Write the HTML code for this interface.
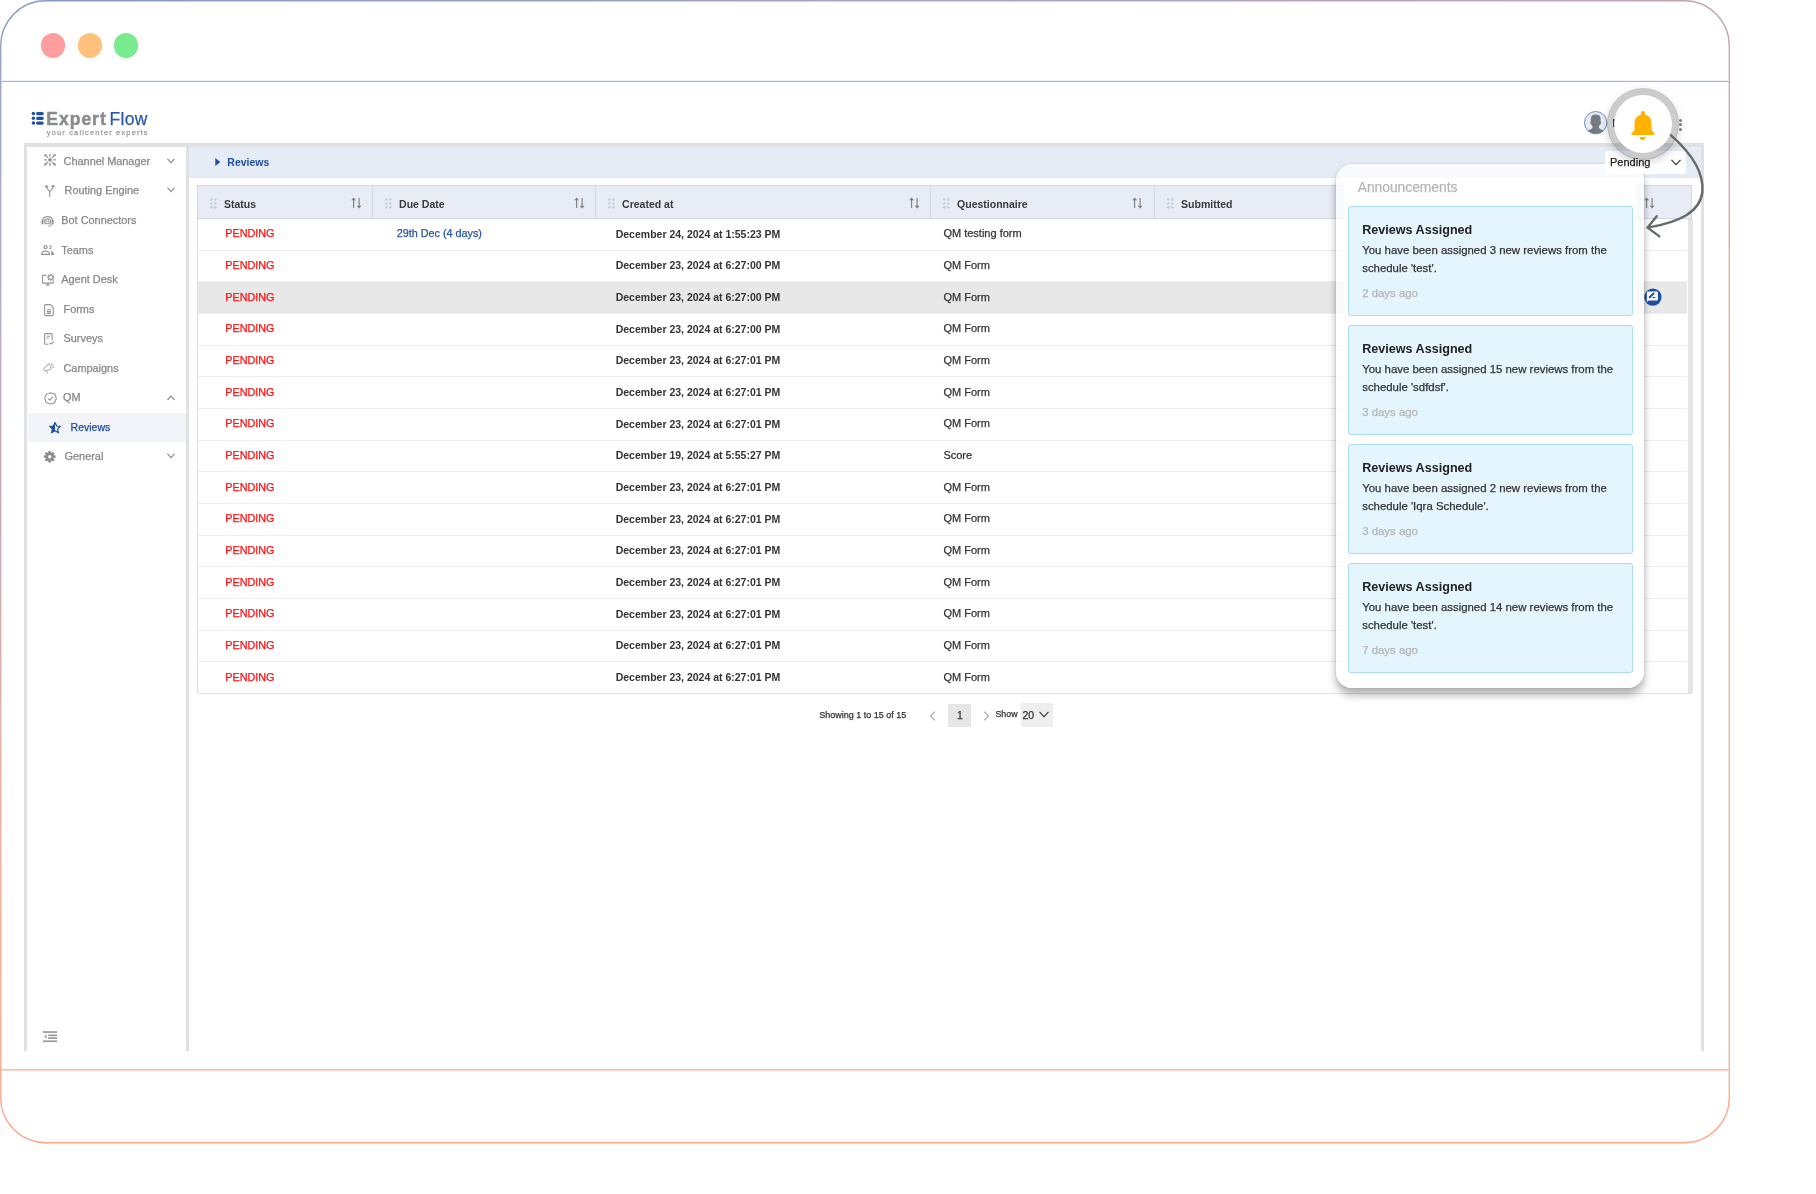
<!DOCTYPE html>
<html><head><meta charset="utf-8"><title>Reviews</title>
<style>
html,body{margin:0;padding:0;}
body{width:1816px;height:1194px;position:relative;overflow:hidden;background:#fff;font-family:'Liberation Sans', sans-serif;}
.t{position:absolute;white-space:nowrap;}
#wrap{position:absolute;left:0;top:0;width:1816px;height:1194px;will-change:transform;}
.r{position:absolute;}
svg{position:absolute;overflow:visible;}
</style></head><body><div id="wrap">

<svg style="left:0;top:0" width="1816" height="1194" viewBox="0 0 1816 1194">
<defs><linearGradient id="fg" gradientUnits="userSpaceOnUse" x1="0" y1="0" x2="282.5" y2="1068.4">
<stop offset="0" stop-color="#8898c8"/><stop offset="0.2" stop-color="#a6a6c2"/><stop offset="0.46" stop-color="#c8a4b0"/><stop offset="0.8" stop-color="#f8a88e"/><stop offset="1" stop-color="#ffa688"/></linearGradient></defs>
<rect x="0.75" y="0.75" width="1728.5" height="1142" rx="45" ry="45" fill="none" stroke="url(#fg)" stroke-width="1.3"/>
<rect x="1" y="80" width="1728" height="1" fill="#ecf1f9"/>
<rect x="1" y="81" width="1728" height="1" fill="#d3abad"/>
<rect x="1" y="1069" width="1728" height="1" fill="#c3d0e6"/>
<rect x="1" y="1070" width="1728" height="1" fill="#fdd2c4"/>
</svg>
<div class="r" style="left:40.9px;top:33.4px;width:24.2px;height:24.2px;border-radius:50%;background:#ff9e9e"></div>
<div class="r" style="left:77.5px;top:33.4px;width:24.2px;height:24.2px;border-radius:50%;background:#ffc17c"></div>
<div class="r" style="left:113.9px;top:33.4px;width:24.2px;height:24.2px;border-radius:50%;background:#77eb8e"></div>
<svg style="left:31px;top:111px" width="14" height="15" viewBox="0 0 14 15">
<g fill="#1f4fa3">
<circle cx="2.4" cy="2.6" r="1.75"/><rect x="5" y="0.9" width="7.8" height="3.4" rx="1.7"/>
<circle cx="2.4" cy="7.35" r="1.75"/><rect x="5" y="5.65" width="7.8" height="3.4" rx="1.7"/>
<circle cx="2.4" cy="12.1" r="1.75"/><rect x="5" y="10.4" width="7.8" height="3.4" rx="1.7"/>
</g></svg>
<div class="t" style="left:46.30px;top:101.84px;font-size:17.5px;line-height:35.0px;color:#8a8b8e;font-weight:bold;letter-spacing:1.0px;-webkit-text-stroke:0.5px currentColor;">Expert</div>
<div class="t" style="left:109.50px;top:101.84px;font-size:17.5px;line-height:35.0px;color:#2c5aa9;font-weight:normal;-webkit-text-stroke:0.25px currentColor;letter-spacing:0.3px;">Flow</div>
<div class="t" style="left:46.80px;top:125.84px;font-size:7.4px;line-height:14.8px;color:#9a9a9a;font-weight:normal;-webkit-text-stroke:0.25px currentColor;letter-spacing:1.2px;">your callcenter experts</div>
<div class="r" style="left:24px;top:143.2px;width:1680.00px;height:3.60px;background:#e0e1e4;"></div>
<div class="r" style="left:24px;top:143.2px;width:3.40px;height:908.00px;background:#e0e1e4;"></div>
<div class="r" style="left:186px;top:143.2px;width:3.00px;height:908.00px;background:#e0e1e4;"></div>
<div class="r" style="left:1700.6px;top:143.2px;width:3.40px;height:908.00px;background:#e0e1e4;"></div>
<div class="r" style="left:28px;top:412.6px;width:157.50px;height:29.40px;background:#f2f4fa;"></div>
<div class="t" style="left:63.60px;top:150.52px;font-size:10.9px;line-height:21.8px;color:#878787;font-weight:normal;-webkit-text-stroke:0.25px currentColor;">Channel Manager</div>
<svg style="left:166.5px;top:158.2px" width="8" height="6" viewBox="0 0 8 6"><polyline points="0.5,0.8 4,4.6 7.5,0.8" fill="none" stroke="#8e8e8e" stroke-width="1.15"/></svg>
<div class="t" style="left:64.60px;top:179.62px;font-size:10.9px;line-height:21.8px;color:#878787;font-weight:normal;-webkit-text-stroke:0.25px currentColor;">Routing Engine</div>
<svg style="left:166.5px;top:187.3px" width="8" height="6" viewBox="0 0 8 6"><polyline points="0.5,0.8 4,4.6 7.5,0.8" fill="none" stroke="#8e8e8e" stroke-width="1.15"/></svg>
<div class="t" style="left:61.30px;top:209.82px;font-size:10.9px;line-height:21.8px;color:#878787;font-weight:normal;-webkit-text-stroke:0.25px currentColor;">Bot Connectors</div>
<div class="t" style="left:61.30px;top:239.62px;font-size:10.9px;line-height:21.8px;color:#878787;font-weight:normal;-webkit-text-stroke:0.25px currentColor;">Teams</div>
<div class="t" style="left:61.30px;top:269.12px;font-size:10.9px;line-height:21.8px;color:#878787;font-weight:normal;-webkit-text-stroke:0.25px currentColor;">Agent Desk</div>
<div class="t" style="left:63.50px;top:299.02px;font-size:10.9px;line-height:21.8px;color:#878787;font-weight:normal;-webkit-text-stroke:0.25px currentColor;">Forms</div>
<div class="t" style="left:63.50px;top:328.42px;font-size:10.9px;line-height:21.8px;color:#878787;font-weight:normal;-webkit-text-stroke:0.25px currentColor;">Surveys</div>
<div class="t" style="left:63.50px;top:358.22px;font-size:10.9px;line-height:21.8px;color:#878787;font-weight:normal;-webkit-text-stroke:0.25px currentColor;">Campaigns</div>
<div class="t" style="left:63.00px;top:386.72px;font-size:10.9px;line-height:21.8px;color:#878787;font-weight:normal;-webkit-text-stroke:0.25px currentColor;">QM</div>
<svg style="left:166.5px;top:394.9px" width="8" height="6" viewBox="0 0 8 6"><polyline points="0.5,5 4,1.2 7.5,5" fill="none" stroke="#8e8e8e" stroke-width="1.15"/></svg>
<div class="t" style="left:64.60px;top:445.62px;font-size:10.9px;line-height:21.8px;color:#878787;font-weight:normal;-webkit-text-stroke:0.25px currentColor;">General</div>
<svg style="left:166.5px;top:453.3px" width="8" height="6" viewBox="0 0 8 6"><polyline points="0.5,0.8 4,4.6 7.5,0.8" fill="none" stroke="#8e8e8e" stroke-width="1.15"/></svg>
<div class="t" style="left:70.60px;top:417.16px;font-size:10.5px;line-height:21.0px;color:#1f4fa3;font-weight:normal;-webkit-text-stroke:0.25px currentColor;">Reviews</div>
<svg style="left:44px;top:154.2px" width="12" height="12" viewBox="0 0 12 12"><circle cx="6" cy="5.8" r="1.9" fill="#959595"/><g stroke="#959595" stroke-width="1.3" fill="none" stroke-linecap="round"><line x1="0.6" y1="5.8" x2="2.4" y2="5.8"/><line x1="9.6" y1="5.8" x2="11.4" y2="5.8"/><line x1="6" y1="0.4" x2="6" y2="2.2"/><line x1="6" y1="9.4" x2="6" y2="11.4"/><line x1="1.4" y1="1.2" x2="3.6" y2="3.4"/><line x1="10.6" y1="1.2" x2="8.4" y2="3.4"/><line x1="1.4" y1="10.4" x2="3.6" y2="8.2"/><line x1="10.6" y1="10.4" x2="8.4" y2="8.2"/></g><g fill="#959595"><circle cx="1.3" cy="1.1" r="1.2"/><circle cx="10.7" cy="1.1" r="1.2"/><circle cx="1.3" cy="10.5" r="1.2"/><circle cx="10.7" cy="10.5" r="1.2"/></g></svg>
<svg style="left:44.2px;top:184.4px" width="11.4" height="13.2" viewBox="0 0 11.4 13.2"><g stroke="#959595" stroke-width="1.2" fill="none" stroke-linecap="round"><path d="M5.7 12.6 V8.2 Q5.7 7.4 4.6 6.4 L2.4 3.2 M5.7 8.2 Q5.7 7.4 6.8 6.4 Q9 4.4 9.1 3"/></g><g fill="#959595"><polygon points="0.2,3.3 2.4,0.8 4.6,3.3"/><polygon points="6.9,3.1 9.1,0.6 11.3,3.1"/></g></svg>
<svg style="left:40.8px;top:215.5px" width="13.2" height="10.8" viewBox="0 0 13.2 10.8"><g stroke="#959595" stroke-width="1.1" fill="none"><path d="M1.4 6 Q1.4 0.6 6.6 0.6 Q11.8 0.6 11.8 6"/><rect x="3.6" y="3.1" width="6" height="4.6" rx="2"/><path d="M10.8 8.4 Q10 10.2 7.2 10.2"/></g><g fill="#959595"><rect x="0.5" y="3.8" width="2" height="4.6" rx="0.9"/><rect x="10.7" y="3.8" width="2" height="4.6" rx="0.9"/><circle cx="5.5" cy="5.4" r="0.9"/><circle cx="7.7" cy="5.4" r="0.9"/></g></svg>
<svg style="left:40.8px;top:245.0px" width="13.4" height="10" viewBox="0 0 13.4 10"><g stroke="#959595" stroke-width="1.2" fill="none"><circle cx="4.5" cy="2.1" r="1.6"/><path d="M8.4 0.5 a1.65 1.65 0 0 1 0 3.3"/><path d="M0.7 9.3 Q0.9 6.1 4.6 6 Q8.4 6.1 8.6 9.3 Z"/></g><g fill="#959595"><path d="M9.9 6.1 Q12.9 6.8 13.1 9.9 H10.3 Q10.4 7.6 9.9 6.1Z"/></g></svg>
<svg style="left:41.8px;top:273.4px" width="12.6" height="12.4" viewBox="0 0 12.6 12.4"><g stroke="#959595" stroke-width="1.1" fill="none" stroke-linejoin="round"><path d="M4.4 2.4 H0.5 V10.1 H11.1 V7.2"/><path d="M5.8 10.1 V11.8 M3.6 12 H8"/><circle cx="8.8" cy="4.3" r="2.1"/></g><g fill="#959595"><circle cx="11.80" cy="4.30" r="0.75"/><circle cx="10.92" cy="6.42" r="0.75"/><circle cx="8.80" cy="7.30" r="0.75"/><circle cx="6.68" cy="6.42" r="0.75"/><circle cx="5.80" cy="4.30" r="0.75"/><circle cx="6.68" cy="2.18" r="0.75"/><circle cx="8.80" cy="1.30" r="0.75"/><circle cx="10.92" cy="2.18" r="0.75"/></g></svg>
<svg style="left:43.6px;top:303.5px" width="10" height="12.2" viewBox="0 0 10 12.2"><g stroke="#959595" stroke-width="1.1" fill="none" stroke-linejoin="round"><path d="M1.3 0.6 H6.4 L9.3 3.5 V10.6 Q9.3 11.6 8.3 11.6 H1.6 Q0.6 11.6 0.6 10.6 V1.6 Q0.6 0.6 1.6 0.6Z"/><path d="M2.8 5.8 H7 M2.8 7.6 H7 M2.8 9.4 H7"/></g></svg>
<svg style="left:43.6px;top:333.3px" width="10.4" height="11.8" viewBox="0 0 10.4 11.8"><g stroke="#959595" stroke-width="1.1" fill="none" stroke-linejoin="round"><path d="M4.4 11.2 H1.6 Q0.6 11.2 0.6 10.2 V1.6 Q0.6 0.6 1.6 0.6 H7.2 Q8.2 0.6 8.2 1.6 V7"/><path d="M2.6 3.2 H6 M2.6 5.2 H4.6"/><path d="M5.6 9.8 L7 11 L9.8 8.4"/></g></svg>
<svg style="left:43px;top:363.2px" width="11.5" height="10.6" viewBox="0 0 11.5 10.6"><g stroke="#b4b4b4" stroke-width="1.1" fill="none" stroke-linejoin="round" stroke-linecap="round"><path d="M1 5.6 L5.4 0.9 Q7.8 1.6 8 6.3 L1.8 7.9 Q0.3 7.4 1 5.6 Z"/><path d="M3.2 7.6 L4.4 9.9"/><path d="M8.7 0.4 V1.8 M9.4 2.7 L10.2 2.1 M9.7 4.3 H11"/></g></svg>
<svg style="left:43.9px;top:391.9px" width="13" height="12.8" viewBox="0 0 13 12.8"><g stroke="#959595" stroke-width="1.1" fill="none" stroke-linejoin="round"><path d="M6.5 0.7 L8.6 1.6 L10.9 1.9 L11.6 4.1 L12.3 6.4 L11.4 8.5 L10.6 10.8 L8.4 11.4 L6.5 12.1 L4.4 11.3 L2.2 10.6 L1.5 8.4 L0.7 6.4 L1.6 4.3 L2.3 2 L4.5 1.5 Z"/><path d="M4.1 6.6 L5.8 8.2 L9 4.9"/></g></svg>
<svg style="left:49.4px;top:421.8px" width="12" height="11.4" viewBox="0 0 12 11.4"><path d="M6 0.6 L7.6 4 L11.4 4.3 L8.6 6.9 L9.4 10.8 L6 8.8 L2.6 10.8 L3.4 6.9 L0.6 4.3 L4.4 4 Z" fill="none" stroke="#1f4fa3" stroke-width="1.2" stroke-linejoin="round"/><path d="M6 0.6 L4.4 4 L0.6 4.3 L3.4 6.9 L2.6 10.8 L6 8.8 Z" fill="#1f4fa3"/></svg>
<svg style="left:43.9px;top:450.6px" width="11.4" height="11.4" viewBox="0 0 11.4 11.4"><g fill="#8c8c8c"><rect x="4.6" y="0" width="2.2" height="11.4" rx="0.4" transform="rotate(0 5.7 5.7)"/><rect x="4.6" y="0" width="2.2" height="11.4" rx="0.4" transform="rotate(45 5.7 5.7)"/><rect x="4.6" y="0" width="2.2" height="11.4" rx="0.4" transform="rotate(90 5.7 5.7)"/><rect x="4.6" y="0" width="2.2" height="11.4" rx="0.4" transform="rotate(135 5.7 5.7)"/><rect x="4.6" y="0" width="2.2" height="11.4" rx="0.4" transform="rotate(180 5.7 5.7)"/><rect x="4.6" y="0" width="2.2" height="11.4" rx="0.4" transform="rotate(225 5.7 5.7)"/><rect x="4.6" y="0" width="2.2" height="11.4" rx="0.4" transform="rotate(270 5.7 5.7)"/><rect x="4.6" y="0" width="2.2" height="11.4" rx="0.4" transform="rotate(315 5.7 5.7)"/><circle cx="5.7" cy="5.7" r="4.2"/></g><circle cx="5.7" cy="5.7" r="1.7" fill="#fff"/></svg>
<div class="r" style="left:189px;top:147px;width:1511.60px;height:30.70px;background:#e6ecf6;"></div>
<svg style="left:214.5px;top:158.4px" width="6" height="8" viewBox="0 0 6 8"><polygon points="0.3,0 5.3,4 0.3,8" fill="#1f4fa3"/></svg>
<div class="t" style="left:227.30px;top:152.26px;font-size:10.5px;line-height:21.0px;color:#1f4fa3;font-weight:bold;">Reviews</div>
<div class="r" style="left:197.3px;top:185.2px;width:1495.20px;height:33.80px;background:#e7ecf5;box-sizing:border-box;border:1px solid #d5d9e0;border-bottom:1px solid #d2d6dc;"></div>
<svg style="left:209.9px;top:198.4px" width="7" height="11" viewBox="0 0 7 11"><g fill="#c9cbcf"><circle cx="1.3" cy="1.4" r="1.25"/><circle cx="5.3" cy="1.4" r="1.25"/><circle cx="1.3" cy="5.4" r="1.25"/><circle cx="5.3" cy="5.4" r="1.25"/><circle cx="1.3" cy="9.2" r="1.25"/><circle cx="5.3" cy="9.2" r="1.25"/></g></svg>
<div class="t" style="left:223.90px;top:193.86px;font-size:10.5px;line-height:21.0px;color:#3a3a3a;font-weight:bold;">Status</div>
<svg style="left:351.0px;top:197px" width="11" height="12" viewBox="0 0 11 12"><g stroke="#7c7e82" stroke-width="1.1"><line x1="2.6" y1="2.4" x2="2.6" y2="10.9"/><line x1="8.1" y1="1" x2="8.1" y2="9.6"/></g><g fill="#7c7e82"><polygon points="0.2,3.3 2.6,0.4 5,3.3"/><polygon points="5.7,8.7 8.1,11.6 10.5,8.7"/></g></svg>
<div class="r" style="left:372.0px;top:186.2px;width:1.00px;height:31.80px;background:#d3d7de;"></div>
<svg style="left:385.1px;top:198.4px" width="7" height="11" viewBox="0 0 7 11"><g fill="#c9cbcf"><circle cx="1.3" cy="1.4" r="1.25"/><circle cx="5.3" cy="1.4" r="1.25"/><circle cx="1.3" cy="5.4" r="1.25"/><circle cx="5.3" cy="5.4" r="1.25"/><circle cx="1.3" cy="9.2" r="1.25"/><circle cx="5.3" cy="9.2" r="1.25"/></g></svg>
<div class="t" style="left:399.10px;top:193.86px;font-size:10.5px;line-height:21.0px;color:#3a3a3a;font-weight:bold;">Due Date</div>
<svg style="left:574.0px;top:197px" width="11" height="12" viewBox="0 0 11 12"><g stroke="#7c7e82" stroke-width="1.1"><line x1="2.6" y1="2.4" x2="2.6" y2="10.9"/><line x1="8.1" y1="1" x2="8.1" y2="9.6"/></g><g fill="#7c7e82"><polygon points="0.2,3.3 2.6,0.4 5,3.3"/><polygon points="5.7,8.7 8.1,11.6 10.5,8.7"/></g></svg>
<div class="r" style="left:595.0px;top:186.2px;width:1.00px;height:31.80px;background:#d3d7de;"></div>
<svg style="left:608.1px;top:198.4px" width="7" height="11" viewBox="0 0 7 11"><g fill="#c9cbcf"><circle cx="1.3" cy="1.4" r="1.25"/><circle cx="5.3" cy="1.4" r="1.25"/><circle cx="1.3" cy="5.4" r="1.25"/><circle cx="5.3" cy="5.4" r="1.25"/><circle cx="1.3" cy="9.2" r="1.25"/><circle cx="5.3" cy="9.2" r="1.25"/></g></svg>
<div class="t" style="left:622.10px;top:193.86px;font-size:10.5px;line-height:21.0px;color:#3a3a3a;font-weight:bold;">Created at</div>
<svg style="left:909.0px;top:197px" width="11" height="12" viewBox="0 0 11 12"><g stroke="#7c7e82" stroke-width="1.1"><line x1="2.6" y1="2.4" x2="2.6" y2="10.9"/><line x1="8.1" y1="1" x2="8.1" y2="9.6"/></g><g fill="#7c7e82"><polygon points="0.2,3.3 2.6,0.4 5,3.3"/><polygon points="5.7,8.7 8.1,11.6 10.5,8.7"/></g></svg>
<div class="r" style="left:930.0px;top:186.2px;width:1.00px;height:31.80px;background:#d3d7de;"></div>
<svg style="left:943.1px;top:198.4px" width="7" height="11" viewBox="0 0 7 11"><g fill="#c9cbcf"><circle cx="1.3" cy="1.4" r="1.25"/><circle cx="5.3" cy="1.4" r="1.25"/><circle cx="1.3" cy="5.4" r="1.25"/><circle cx="5.3" cy="5.4" r="1.25"/><circle cx="1.3" cy="9.2" r="1.25"/><circle cx="5.3" cy="9.2" r="1.25"/></g></svg>
<div class="t" style="left:957.10px;top:193.86px;font-size:10.5px;line-height:21.0px;color:#3a3a3a;font-weight:bold;">Questionnaire</div>
<svg style="left:1132.0px;top:197px" width="11" height="12" viewBox="0 0 11 12"><g stroke="#7c7e82" stroke-width="1.1"><line x1="2.6" y1="2.4" x2="2.6" y2="10.9"/><line x1="8.1" y1="1" x2="8.1" y2="9.6"/></g><g fill="#7c7e82"><polygon points="0.2,3.3 2.6,0.4 5,3.3"/><polygon points="5.7,8.7 8.1,11.6 10.5,8.7"/></g></svg>
<div class="r" style="left:1154.0px;top:186.2px;width:1.00px;height:31.80px;background:#d3d7de;"></div>
<svg style="left:1167.1px;top:198.4px" width="7" height="11" viewBox="0 0 7 11"><g fill="#c9cbcf"><circle cx="1.3" cy="1.4" r="1.25"/><circle cx="5.3" cy="1.4" r="1.25"/><circle cx="1.3" cy="5.4" r="1.25"/><circle cx="5.3" cy="5.4" r="1.25"/><circle cx="1.3" cy="9.2" r="1.25"/><circle cx="5.3" cy="9.2" r="1.25"/></g></svg>
<div class="t" style="left:1181.10px;top:193.86px;font-size:10.5px;line-height:21.0px;color:#3a3a3a;font-weight:bold;">Submitted</div>
<svg style="left:1644px;top:197px" width="11" height="12" viewBox="0 0 11 12"><g stroke="#7c7e82" stroke-width="1.1"><line x1="2.6" y1="2.4" x2="2.6" y2="10.9"/><line x1="8.1" y1="1" x2="8.1" y2="9.6"/></g><g fill="#7c7e82"><polygon points="0.2,3.3 2.6,0.4 5,3.3"/><polygon points="5.7,8.7 8.1,11.6 10.5,8.7"/></g></svg>
<div class="r" style="left:197.3px;top:219.0px;width:1.00px;height:474.40px;background:#dcdfe3;"></div>
<div class="r" style="left:198.3px;top:249.66px;width:1489.20px;height:1.00px;background:#eeeeee;"></div>
<div class="t" style="left:225.30px;top:223.36px;font-size:10.8px;line-height:21.6px;color:#ff1010;font-weight:normal;-webkit-text-stroke:0.25px currentColor;">PENDING</div>
<div class="t" style="left:396.70px;top:223.36px;font-size:10.8px;line-height:21.6px;color:#2553a6;font-weight:normal;-webkit-text-stroke:0.25px currentColor;">29th Dec (4 days)</div>
<div class="t" style="left:615.70px;top:223.76px;font-size:10.5px;line-height:21.0px;color:#333;font-weight:bold;">December 24, 2024 at 1:55:23 PM</div>
<div class="t" style="left:943.40px;top:222.49px;font-size:11px;line-height:22px;color:#333;font-weight:normal;-webkit-text-stroke:0.25px currentColor;">QM testing form</div>
<div class="r" style="left:198.3px;top:281.32px;width:1489.20px;height:1.00px;background:#eeeeee;"></div>
<div class="t" style="left:225.30px;top:255.02px;font-size:10.8px;line-height:21.6px;color:#ff1010;font-weight:normal;-webkit-text-stroke:0.25px currentColor;">PENDING</div>
<div class="t" style="left:615.70px;top:255.42px;font-size:10.5px;line-height:21.0px;color:#333;font-weight:bold;">December 23, 2024 at 6:27:00 PM</div>
<div class="t" style="left:943.40px;top:254.15px;font-size:11px;line-height:22px;color:#333;font-weight:normal;-webkit-text-stroke:0.25px currentColor;">QM Form</div>
<div class="r" style="left:198.3px;top:282.32px;width:1489.20px;height:31.66px;background:#e8e8e8;"></div>
<div class="r" style="left:198.3px;top:312.98px;width:1489.20px;height:1.00px;background:#eeeeee;"></div>
<div class="t" style="left:225.30px;top:286.68px;font-size:10.8px;line-height:21.6px;color:#ff1010;font-weight:normal;-webkit-text-stroke:0.25px currentColor;">PENDING</div>
<div class="t" style="left:615.70px;top:287.08px;font-size:10.5px;line-height:21.0px;color:#333;font-weight:bold;">December 23, 2024 at 6:27:00 PM</div>
<div class="t" style="left:943.40px;top:285.81px;font-size:11px;line-height:22px;color:#333;font-weight:normal;-webkit-text-stroke:0.25px currentColor;">QM Form</div>
<div class="r" style="left:198.3px;top:344.64000000000004px;width:1489.20px;height:1.00px;background:#eeeeee;"></div>
<div class="t" style="left:225.30px;top:318.34px;font-size:10.8px;line-height:21.6px;color:#ff1010;font-weight:normal;-webkit-text-stroke:0.25px currentColor;">PENDING</div>
<div class="t" style="left:615.70px;top:318.74px;font-size:10.5px;line-height:21.0px;color:#333;font-weight:bold;">December 23, 2024 at 6:27:00 PM</div>
<div class="t" style="left:943.40px;top:317.47px;font-size:11px;line-height:22px;color:#333;font-weight:normal;-webkit-text-stroke:0.25px currentColor;">QM Form</div>
<div class="r" style="left:198.3px;top:376.3px;width:1489.20px;height:1.00px;background:#eeeeee;"></div>
<div class="t" style="left:225.30px;top:350.00px;font-size:10.8px;line-height:21.6px;color:#ff1010;font-weight:normal;-webkit-text-stroke:0.25px currentColor;">PENDING</div>
<div class="t" style="left:615.70px;top:350.40px;font-size:10.5px;line-height:21.0px;color:#333;font-weight:bold;">December 23, 2024 at 6:27:01 PM</div>
<div class="t" style="left:943.40px;top:349.13px;font-size:11px;line-height:22px;color:#333;font-weight:normal;-webkit-text-stroke:0.25px currentColor;">QM Form</div>
<div class="r" style="left:198.3px;top:407.96000000000004px;width:1489.20px;height:1.00px;background:#eeeeee;"></div>
<div class="t" style="left:225.30px;top:381.66px;font-size:10.8px;line-height:21.6px;color:#ff1010;font-weight:normal;-webkit-text-stroke:0.25px currentColor;">PENDING</div>
<div class="t" style="left:615.70px;top:382.06px;font-size:10.5px;line-height:21.0px;color:#333;font-weight:bold;">December 23, 2024 at 6:27:01 PM</div>
<div class="t" style="left:943.40px;top:380.79px;font-size:11px;line-height:22px;color:#333;font-weight:normal;-webkit-text-stroke:0.25px currentColor;">QM Form</div>
<div class="r" style="left:198.3px;top:439.62000000000006px;width:1489.20px;height:1.00px;background:#eeeeee;"></div>
<div class="t" style="left:225.30px;top:413.32px;font-size:10.8px;line-height:21.6px;color:#ff1010;font-weight:normal;-webkit-text-stroke:0.25px currentColor;">PENDING</div>
<div class="t" style="left:615.70px;top:413.72px;font-size:10.5px;line-height:21.0px;color:#333;font-weight:bold;">December 23, 2024 at 6:27:01 PM</div>
<div class="t" style="left:943.40px;top:412.45px;font-size:11px;line-height:22px;color:#333;font-weight:normal;-webkit-text-stroke:0.25px currentColor;">QM Form</div>
<div class="r" style="left:198.3px;top:471.28000000000003px;width:1489.20px;height:1.00px;background:#eeeeee;"></div>
<div class="t" style="left:225.30px;top:444.98px;font-size:10.8px;line-height:21.6px;color:#ff1010;font-weight:normal;-webkit-text-stroke:0.25px currentColor;">PENDING</div>
<div class="t" style="left:615.70px;top:445.38px;font-size:10.5px;line-height:21.0px;color:#333;font-weight:bold;">December 19, 2024 at 5:55:27 PM</div>
<div class="t" style="left:943.40px;top:444.11px;font-size:11px;line-height:22px;color:#333;font-weight:normal;-webkit-text-stroke:0.25px currentColor;">Score</div>
<div class="r" style="left:198.3px;top:502.94px;width:1489.20px;height:1.00px;background:#eeeeee;"></div>
<div class="t" style="left:225.30px;top:476.64px;font-size:10.8px;line-height:21.6px;color:#ff1010;font-weight:normal;-webkit-text-stroke:0.25px currentColor;">PENDING</div>
<div class="t" style="left:615.70px;top:477.04px;font-size:10.5px;line-height:21.0px;color:#333;font-weight:bold;">December 23, 2024 at 6:27:01 PM</div>
<div class="t" style="left:943.40px;top:475.77px;font-size:11px;line-height:22px;color:#333;font-weight:normal;-webkit-text-stroke:0.25px currentColor;">QM Form</div>
<div class="r" style="left:198.3px;top:534.6px;width:1489.20px;height:1.00px;background:#eeeeee;"></div>
<div class="t" style="left:225.30px;top:508.30px;font-size:10.8px;line-height:21.6px;color:#ff1010;font-weight:normal;-webkit-text-stroke:0.25px currentColor;">PENDING</div>
<div class="t" style="left:615.70px;top:508.70px;font-size:10.5px;line-height:21.0px;color:#333;font-weight:bold;">December 23, 2024 at 6:27:01 PM</div>
<div class="t" style="left:943.40px;top:507.43px;font-size:11px;line-height:22px;color:#333;font-weight:normal;-webkit-text-stroke:0.25px currentColor;">QM Form</div>
<div class="r" style="left:198.3px;top:566.26px;width:1489.20px;height:1.00px;background:#eeeeee;"></div>
<div class="t" style="left:225.30px;top:539.96px;font-size:10.8px;line-height:21.6px;color:#ff1010;font-weight:normal;-webkit-text-stroke:0.25px currentColor;">PENDING</div>
<div class="t" style="left:615.70px;top:540.36px;font-size:10.5px;line-height:21.0px;color:#333;font-weight:bold;">December 23, 2024 at 6:27:01 PM</div>
<div class="t" style="left:943.40px;top:539.09px;font-size:11px;line-height:22px;color:#333;font-weight:normal;-webkit-text-stroke:0.25px currentColor;">QM Form</div>
<div class="r" style="left:198.3px;top:597.92px;width:1489.20px;height:1.00px;background:#eeeeee;"></div>
<div class="t" style="left:225.30px;top:571.62px;font-size:10.8px;line-height:21.6px;color:#ff1010;font-weight:normal;-webkit-text-stroke:0.25px currentColor;">PENDING</div>
<div class="t" style="left:615.70px;top:572.02px;font-size:10.5px;line-height:21.0px;color:#333;font-weight:bold;">December 23, 2024 at 6:27:01 PM</div>
<div class="t" style="left:943.40px;top:570.75px;font-size:11px;line-height:22px;color:#333;font-weight:normal;-webkit-text-stroke:0.25px currentColor;">QM Form</div>
<div class="r" style="left:198.3px;top:629.58px;width:1489.20px;height:1.00px;background:#eeeeee;"></div>
<div class="t" style="left:225.30px;top:603.28px;font-size:10.8px;line-height:21.6px;color:#ff1010;font-weight:normal;-webkit-text-stroke:0.25px currentColor;">PENDING</div>
<div class="t" style="left:615.70px;top:603.68px;font-size:10.5px;line-height:21.0px;color:#333;font-weight:bold;">December 23, 2024 at 6:27:01 PM</div>
<div class="t" style="left:943.40px;top:602.41px;font-size:11px;line-height:22px;color:#333;font-weight:normal;-webkit-text-stroke:0.25px currentColor;">QM Form</div>
<div class="r" style="left:198.3px;top:661.2399999999999px;width:1489.20px;height:1.00px;background:#eeeeee;"></div>
<div class="t" style="left:225.30px;top:634.94px;font-size:10.8px;line-height:21.6px;color:#ff1010;font-weight:normal;-webkit-text-stroke:0.25px currentColor;">PENDING</div>
<div class="t" style="left:615.70px;top:635.34px;font-size:10.5px;line-height:21.0px;color:#333;font-weight:bold;">December 23, 2024 at 6:27:01 PM</div>
<div class="t" style="left:943.40px;top:634.07px;font-size:11px;line-height:22px;color:#333;font-weight:normal;-webkit-text-stroke:0.25px currentColor;">QM Form</div>
<div class="r" style="left:198.3px;top:692.9px;width:1494.20px;height:1.00px;background:#e2e3e5;"></div>
<div class="t" style="left:225.30px;top:666.60px;font-size:10.8px;line-height:21.6px;color:#ff1010;font-weight:normal;-webkit-text-stroke:0.25px currentColor;">PENDING</div>
<div class="t" style="left:615.70px;top:667.00px;font-size:10.5px;line-height:21.0px;color:#333;font-weight:bold;">December 23, 2024 at 6:27:01 PM</div>
<div class="t" style="left:943.40px;top:665.73px;font-size:11px;line-height:22px;color:#333;font-weight:normal;-webkit-text-stroke:0.25px currentColor;">QM Form</div>
<div class="r" style="left:1687.5px;top:219.0px;width:5.00px;height:474.40px;background:#e4e4e4;"></div>
<svg style="left:1643.6px;top:288.3px" width="18" height="18" viewBox="0 0 18 18">
<circle cx="8.9" cy="9.1" r="8.7" fill="#1f4fa3"/>
<path d="M3.5 3.4 H13.1 Q13.9 3.4 13.9 4.2 V11.6 Q13.9 12.4 13.1 12.4 H4.8 L2.8 14 V4.2 Q2.8 3.4 3.5 3.4Z" fill="#fff"/>
<path d="M5.7 9.3 L9.6 5.5" stroke="#1f4fa3" stroke-width="1.9" stroke-linecap="round"/><path d="M8.6 9.5 H11.4" stroke="#1f4fa3" stroke-width="1.1"/>
</svg>
<div class="t" style="left:819.30px;top:706.08px;font-size:9px;line-height:18px;color:#333;font-weight:normal;-webkit-text-stroke:0.25px currentColor;">Showing 1 to 15 of 15</div>
<svg style="left:929px;top:710.5px" width="7" height="10" viewBox="0 0 7 10"><polyline points="6,0.6 1.4,5 6,9.4" fill="none" stroke="#a5a5a5" stroke-width="1.1"/></svg>
<div class="r" style="left:948px;top:703.9px;width:23.10px;height:22.70px;background:#e6e6e6;"></div>
<div class="t" style="left:957.00px;top:704.86px;font-size:10.5px;line-height:21.0px;color:#333;font-weight:normal;-webkit-text-stroke:0.25px currentColor;">1</div>
<svg style="left:983px;top:710.5px" width="7" height="10" viewBox="0 0 7 10"><polyline points="1,0.6 5.6,5 1,9.4" fill="none" stroke="#a5a5a5" stroke-width="1.1"/></svg>
<div class="t" style="left:995.50px;top:706.35px;font-size:8.8px;line-height:17.6px;color:#333;font-weight:normal;-webkit-text-stroke:0.25px currentColor;">Show</div>
<div class="r" style="left:1020.5px;top:702.8px;width:32.50px;height:23.80px;background:#eeeeee;"></div>
<div class="t" style="left:1022.50px;top:704.86px;font-size:10.5px;line-height:21.0px;color:#333;font-weight:normal;-webkit-text-stroke:0.25px currentColor;">20</div>
<svg style="left:1039px;top:711px" width="10" height="7" viewBox="0 0 10 7"><polyline points="0.5,0.8 5,5.6 9.5,0.8" fill="none" stroke="#333" stroke-width="1.1"/></svg>
<svg style="left:42.6px;top:1031px" width="15" height="12" viewBox="0 0 15 12"><g fill="#9a9a9a">
<rect x="0" y="0.2" width="14.1" height="1.7"/><rect x="5.2" y="3.5" width="8.9" height="1.7"/><rect x="5.2" y="6.3" width="8.9" height="1.7"/><rect x="0" y="9.4" width="14.1" height="1.7"/>
<polygon points="3.6,3.4 1.2,5.6 3.6,7.8"/></g></svg>
<div class="r" style="left:1336px;top:164.2px;width:308px;height:523.5px;border-radius:16px;background:rgba(255,255,255,0.72);box-shadow:0 7px 9px rgba(0,0,0,0.3), 0 0 3px rgba(0,0,0,0.12)"></div>
<div class="r" style="left:1344px;top:178px;width:292.00px;height:502.00px;background:#ffffff;"></div>
<div class="t" style="left:1357.70px;top:173.72px;font-size:13.8px;line-height:27.6px;color:#b6b6b6;font-weight:normal;-webkit-text-stroke:0.25px currentColor;">Announcements</div>
<div class="r" style="left:1347.5px;top:206.0px;width:285px;height:109.6px;box-sizing:border-box;border:1px solid #a9dcf5;border-radius:3px;background:#e4f5fd"></div>
<div class="t" style="left:1362.20px;top:218.23px;font-size:12.6px;line-height:25.2px;color:#222;font-weight:bold;">Reviews Assigned</div>
<div class="t" style="left:1362.20px;top:239.45px;font-size:11.4px;line-height:22.8px;color:#333;font-weight:normal;-webkit-text-stroke:0.25px currentColor;">You have been assigned 3 new reviews from the</div>
<div class="t" style="left:1362.20px;top:256.65px;font-size:11.4px;line-height:22.8px;color:#333;font-weight:normal;-webkit-text-stroke:0.25px currentColor;">schedule 'test'.</div>
<div class="t" style="left:1362.20px;top:281.65px;font-size:11.4px;line-height:22.8px;color:#b5b5b5;font-weight:normal;-webkit-text-stroke:0.25px currentColor;">2 days ago</div>
<div class="r" style="left:1347.5px;top:325.0px;width:285px;height:109.6px;box-sizing:border-box;border:1px solid #a9dcf5;border-radius:3px;background:#e4f5fd"></div>
<div class="t" style="left:1362.20px;top:337.23px;font-size:12.6px;line-height:25.2px;color:#222;font-weight:bold;">Reviews Assigned</div>
<div class="t" style="left:1362.20px;top:358.45px;font-size:11.4px;line-height:22.8px;color:#333;font-weight:normal;-webkit-text-stroke:0.25px currentColor;">You have been assigned 15 new reviews from the</div>
<div class="t" style="left:1362.20px;top:375.65px;font-size:11.4px;line-height:22.8px;color:#333;font-weight:normal;-webkit-text-stroke:0.25px currentColor;">schedule 'sdfdsf'.</div>
<div class="t" style="left:1362.20px;top:400.65px;font-size:11.4px;line-height:22.8px;color:#b5b5b5;font-weight:normal;-webkit-text-stroke:0.25px currentColor;">3 days ago</div>
<div class="r" style="left:1347.5px;top:444.0px;width:285px;height:109.6px;box-sizing:border-box;border:1px solid #a9dcf5;border-radius:3px;background:#e4f5fd"></div>
<div class="t" style="left:1362.20px;top:456.23px;font-size:12.6px;line-height:25.2px;color:#222;font-weight:bold;">Reviews Assigned</div>
<div class="t" style="left:1362.20px;top:477.45px;font-size:11.4px;line-height:22.8px;color:#333;font-weight:normal;-webkit-text-stroke:0.25px currentColor;">You have been assigned 2 new reviews from the</div>
<div class="t" style="left:1362.20px;top:494.65px;font-size:11.4px;line-height:22.8px;color:#333;font-weight:normal;-webkit-text-stroke:0.25px currentColor;">schedule 'Iqra Schedule'.</div>
<div class="t" style="left:1362.20px;top:519.65px;font-size:11.4px;line-height:22.8px;color:#b5b5b5;font-weight:normal;-webkit-text-stroke:0.25px currentColor;">3 days ago</div>
<div class="r" style="left:1347.5px;top:563.0px;width:285px;height:109.6px;box-sizing:border-box;border:1px solid #a9dcf5;border-radius:3px;background:#e4f5fd"></div>
<div class="t" style="left:1362.20px;top:575.23px;font-size:12.6px;line-height:25.2px;color:#222;font-weight:bold;">Reviews Assigned</div>
<div class="t" style="left:1362.20px;top:596.45px;font-size:11.4px;line-height:22.8px;color:#333;font-weight:normal;-webkit-text-stroke:0.25px currentColor;">You have been assigned 14 new reviews from the</div>
<div class="t" style="left:1362.20px;top:613.65px;font-size:11.4px;line-height:22.8px;color:#333;font-weight:normal;-webkit-text-stroke:0.25px currentColor;">schedule 'test'.</div>
<div class="t" style="left:1362.20px;top:638.65px;font-size:11.4px;line-height:22.8px;color:#b5b5b5;font-weight:normal;-webkit-text-stroke:0.25px currentColor;">7 days ago</div>
<div class="r" style="left:1605px;top:150.5px;width:81.00px;height:23.50px;background:#ffffff;border-radius:3px;"></div>
<div class="t" style="left:1610.00px;top:150.99px;font-size:11px;line-height:22px;color:#222;font-weight:normal;-webkit-text-stroke:0.25px currentColor;">Pending</div>
<svg style="left:1670.5px;top:159px" width="10" height="7" viewBox="0 0 10 7"><polyline points="0.5,0.8 5,5.6 9.5,0.8" fill="none" stroke="#333" stroke-width="1.2"/></svg>
<svg style="left:1583.6px;top:110.9px" width="23.4" height="23.4" viewBox="0 0 24 24">
<defs><clipPath id="avc"><circle cx="12" cy="12" r="11.3"/></clipPath></defs>
<circle cx="12" cy="12" r="11.5" fill="#e9ebef"/>
<g clip-path="url(#avc)" fill="#757a83">
<path d="M7 8 Q7 3.6 12 3.6 Q17 3.6 17 8 V10.6 Q17.8 11.2 17.3 12.8 Q16.8 13.9 16.1 14.3 Q15.2 15.6 15.2 17.2 Q15.8 18.6 19 19.6 Q22 20.6 24 23 V26 H0 V23 Q2 20.6 5 19.6 Q8.2 18.6 8.8 17.2 Q8.8 15.6 7.9 14.3 Q7.2 13.9 6.7 12.8 Q6.2 11.2 7 10.6 Z"/>
</g>
<circle cx="12" cy="12" r="11.5" fill="none" stroke="#5a80c4" stroke-width="0.9"/>
</svg>
<div class="r" style="left:1612.6px;top:119.4px;width:2.00px;height:7.60px;background:#1f4fa3;"></div>
<div class="r" style="left:1608.3px;top:89.3px;width:70px;height:70px;border-radius:50%;box-shadow:0 3px 10px rgba(0,0,0,0.2)"></div>
<div class="r" style="left:1607.3px;top:88.3px;width:72px;height:72px;box-sizing:border-box;border-radius:50%;border:7.1px solid rgba(0,0,0,0.2);background:#fff;background-clip:padding-box;"></div>
<svg style="left:1631px;top:111px" width="24" height="30" viewBox="0 0 24 30">
<g fill="#ffb300">
<rect x="9.8" y="0.1" width="4.3" height="4.6" rx="2"/>
<path d="M12 3.6 C6.6 3.6 3.6 7.2 3.5 12.6 V19 L0.4 22.5 V23.9 H23.4 V22.5 L20.6 19 V12.6 C20.5 7.2 17.4 3.6 12 3.6z"/>
<path d="M8.7 26 H14.6 a2.95 2.95 0 0 1 -5.9 0z"/>
</g></svg>
<div class="r" style="left:1679.3px;top:118.5px;width:3px;height:3px;border-radius:50%;background:#7a7a7a"></div>
<div class="r" style="left:1679.3px;top:123.1px;width:3px;height:3px;border-radius:50%;background:#7a7a7a"></div>
<div class="r" style="left:1679.3px;top:127.7px;width:3px;height:3px;border-radius:50%;background:#7a7a7a"></div>
<svg style="left:0;top:0" width="1816" height="1194" viewBox="0 0 1816 1194">
<g fill="none" stroke="#66696d" stroke-width="2.4" stroke-linecap="round" stroke-linejoin="round">
<path d="M1670.8 135.2 C1690 152 1704 172 1702.4 192 C1700 212 1680 222 1647.8 227.6"/>
<polyline points="1656.7,216.3 1647.6,227.6 1659.4,236.4"/>
</g></svg>
</div></body></html>
